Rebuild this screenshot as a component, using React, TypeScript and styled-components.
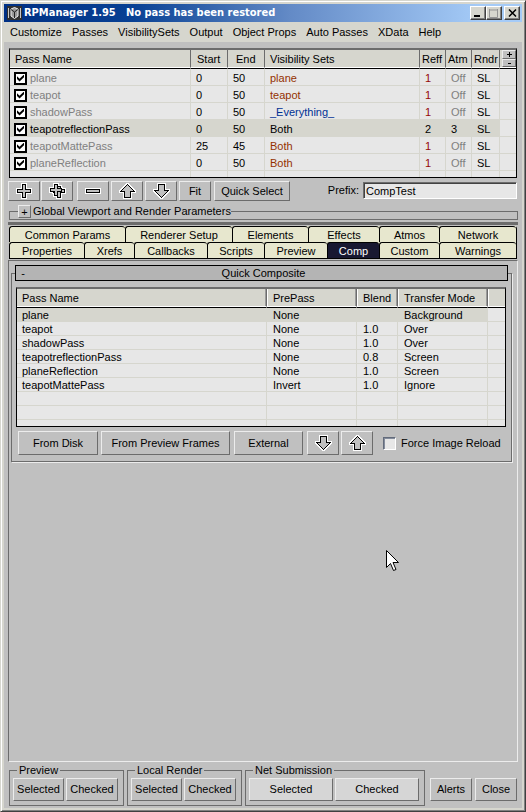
import React from "react";
import styled, { createGlobalStyle, css } from "styled-components";

const face = "#d6d6ce";
const client = "#c0c0c0";
const cell = "#e7e7e7";
const dark = "#6c6c6c";
const light = "#ececec";
const cream = "#e7e7ce";
const navy = "#181831";

const Global = createGlobalStyle`
  *, *::before, *::after { box-sizing: border-box; }
  body { margin: 0; font: 11px/13px "Liberation Sans", Arial, sans-serif; color: #000; }
  button, input { font: inherit; color: inherit; margin: 0; padding: 0; border-radius: 0; }
  button { white-space: nowrap; }
`;

const raised = css`
  border: 1px solid;
  border-color: ${light} ${dark} ${dark} ${light};
`;

const Window = styled.div`
  position: relative;
  display: flex;
  flex-direction: column;
  min-height: 100vh;
  border: 1px solid;
  border-color: ${face} #404040 #404040 ${face};
  background: ${face};
  padding: 2px;
  box-shadow: inset 1px 1px #fff, inset -1px -1px #808080;
`;

const TitleBar = styled.header`
  display: flex;
  align-items: center;
  height: 18px;
  margin: 1px;
  padding: 0 2px 0 3px;
  gap: 2px;
  background: linear-gradient(90deg, #003084 0%, #084194 25%, #638ac6 55%, #a5cbf7 92%);
  color: #fff;
`;

const Title = styled.h1`
  flex: 1;
  margin: 0;
  white-space: pre;
  font: bold 11px/16px "DejaVu Sans Condensed", "Noto Sans", sans-serif;
`;

const Caption = styled.button<{ $apart?: boolean }>`
  display: grid;
  place-items: center;
  width: 16px;
  height: 14px;
  margin-left: ${(p) => (p.$apart ? 0 : -2)}px;
  border: 1px solid;
  border-color: #fff #404040 #404040 #fff;
  box-shadow: inset -1px -1px #808080;
  background: ${face};
`;

const MenuBar = styled.nav`
  display: flex;
  align-items: center;
  gap: 10px;
  height: 19px;
  padding: 0 7px;
`;

const MenuItem = styled.button`
  border: 0;
  background: none;
`;

const Client = styled.main`
  flex: 1;
  display: flex;
  flex-direction: column;
  margin: 0 1px 1px;
  padding: 6px 4px 2px;
  background: ${client};
`;

const ListFrame = styled.div`
  margin: 0 1px;
  border: 1px solid #000;
  border-top: 2px solid ${dark};
`;

const List = styled.table<{ $row: number; $head: number }>`
  width: 100%;
  table-layout: fixed;
  border-collapse: separate;
  border-spacing: 0;
  background: ${cell};
  th, td {
    padding: 2px 0 0 5px;
    text-align: left;
    font-weight: normal;
    line-height: 11px;
    white-space: nowrap;
  }
  th {
    height: ${(p) => p.$head}px;
    background: ${face};
    border-right: 1px solid ${dark};
    border-bottom: 1px solid #fff;
  }
  th:last-child { border-right: 0; padding: 0; }
  td {
    height: ${(p) => p.$row}px;
    border-right: 1px solid ${face};
    border-bottom: 1px solid ${face};
  }
  td:last-child { border-right: 0; }
  tbody tr:first-child td { border-top: 1px solid #000; height: ${(p) => p.$row + 1}px; }
`;

const Row = styled.tr<{ $selected?: boolean }>`
  td:not(:last-child) { background: ${(p) => (p.$selected ? face : "transparent")}; }
`;

const PartialRow = styled.tr`
  td { height: 6px; border-bottom: 0; }
`;

const Tone = styled.span<{ $color?: string; $indent?: number }>`
  color: ${(p) => p.$color || "#000"};
  padding-left: ${(p) => p.$indent || 0}px;
`;

const PassLabel = styled.label<{ $on?: boolean }>`
  display: flex;
  align-items: center;
  gap: 3px;
  margin-left: -1px;
  color: ${(p) => (p.$on ? "#000" : "#808080")};
`;

const PassCheck = styled.input`
  appearance: none;
  width: 13px;
  height: 13px;
  border: 2px solid #000;
  background: #fff;
  &:checked::before {
    content: "";
    display: block;
    width: 7px;
    height: 7px;
    margin: 1px;
    background: #000;
    clip-path: polygon(0 25%, 36% 60%, 100% 0, 100% 38%, 36% 100%, 0 66%);
  }
`;

const Spin = styled.div`
  display: grid;
  grid-template-rows: 9px 8px;
  height: 17px;
  margin-left: 2px;
`;

const SpinButton = styled.button`
  ${raised}
  display: grid;
  place-items: center;
  background: ${client};
`;

const Toolbar = styled.div`
  display: flex;
  align-items: flex-start;
  margin-top: 3px;
  height: 20px;
`;

const PushButton = styled.button<{ $w?: number; $h?: number; $gap?: number; $pale?: boolean }>`
  ${raised}
  display: grid;
  place-items: center;
  width: ${(p) => (p.$w ? `${p.$w}px` : "auto")};
  height: ${(p) => p.$h || 20}px;
  margin-right: ${(p) => p.$gap || 2}px;
  background: ${(p) => (p.$pale ? "#d6d6d6" : client)};
`;

const PrefixLabel = styled.label`
  display: flex;
  flex: 1;
  justify-content: flex-end;
  gap: 4px;
  margin-top: 1px;
  padding-right: 1px;
  line-height: 16px;
`;

const PrefixInput = styled.input`
  width: 154px;
  height: 17px;
  padding: 0 2px;
  border: 1px solid;
  border-color: ${dark} #fff #fff ${dark};
  outline: 0;
  background: ${cell};
  box-shadow: inset 1px 1px #424242;
`;

const GlobalGroup = styled.fieldset`
  min-width: 0;
  height: 15px;
  margin: 4px 0 2px 1px;
  padding: 0 8px;
  border: 1px solid ${dark};
`;

const GlobalLegend = styled.legend`
  display: flex;
  align-items: center;
  gap: 2px;
  height: 13px;
  padding: 0;
`;

const Expand = styled.button`
  ${raised}
  width: 13px;
  height: 13px;
  background: ${client};
  line-height: 10px;
`;

const Divider = styled.hr`
  width: 100%;
  height: 3px;
  margin: 0;
  border: 0;
  background: ${dark};
`;

const Tabs = styled.div`
  margin: 1px 1px 0;
  border-bottom: 1px solid #000;
  border-right: 1px solid #000;
  border-top-right-radius: 3px;
`;

const TabRow = styled.div<{ $cols: string }>`
  display: grid;
  grid-template-columns: ${(p) => p.$cols};
  height: 16px;
  background: ${cream};
`;

const Tab = styled.button<{ $active?: boolean }>`
  min-width: 0;
  border: 1px solid #000;
  border-width: 1px 0 0 1px;
  border-top-left-radius: 3px;
  border-top-right-radius: 3px;
  background: ${(p) => (p.$active ? navy : cream)};
  color: ${(p) => (p.$active ? "#fff" : "#000")};
  line-height: 14px;
`;

const Panel = styled.section`
  flex: 1;
  margin-top: 1px;
  padding: 4px 5px 4px 2px;
  border: 1px solid;
  border-color: ${dark} ${light} ${light} ${dark};
`;

const Rollout = styled.fieldset`
  min-width: 0;
  margin: 0;
  padding: 0 3px 6px;
  border: 1px solid ${dark};
  box-shadow: 1px 1px ${light};
`;

const RolloutLegend = styled.legend`
  width: 100%;
  padding: 0;
`;

const RolloutButton = styled.button`
  display: grid;
  grid-template-columns: 14px 1fr 10px;
  align-items: center;
  width: 100%;
  height: 16px;
  border: 1px solid #000;
  background: #b4b4b4;
  line-height: 14px;
`;

const RolloutBody = styled.div`
  padding-top: 6px;
`;

const Actions = styled.div`
  display: flex;
  align-items: center;
  margin-top: 4px;
  padding-left: 3px;
`;

const Reload = styled.label`
  display: flex;
  align-items: center;
  gap: 5px;
  margin-left: 8px;
  white-space: nowrap;
`;

const ReloadCheck = styled.input`
  appearance: none;
  width: 13px;
  height: 13px;
  border: 1px solid;
  border-color: #636b7b #fff #fff #636b7b;
  box-shadow: inset 1px 1px #848c9c;
  background: ${cell};
`;

const Footer = styled.footer`
  display: flex;
  gap: 3px;
  margin-top: 2px;
  padding-left: 1px;
`;

const FootGroup = styled.fieldset`
  display: flex;
  min-width: 0;
  margin: 0;
  padding: 1px 3px 4px;
  border: 1px solid ${dark};
  legend {
    margin-left: 4px;
    padding: 0 2px;
  }
`;

const FootEnd = styled.div`
  display: flex;
  flex: 1;
  justify-content: flex-end;
  align-items: flex-end;
  gap: 3px;
  padding: 0 1px 5px 0;
  button { margin: 0; }
`;

const Pointer = styled.svg`
  position: absolute;
  left: 385px;
  top: 549px;
  pointer-events: none;
`;

const shapes = {
  plus: "M6.500 1.500H9.500V6.500H14.500V9.500H9.500V14.500H6.500V9.500H1.500V6.500H6.500Z",
  minus: "M1.500 6.500H14.500V9.500H1.500Z",
  up: "M8.500 1.500L15.500 8.500H11.500V14.500H5.500V8.500H1.500Z",
  down: "M8.500 14.500L1.500 7.500H5.500V1.500H11.500V7.500H15.500Z",
};

function Glyph({ kind }: { kind: keyof typeof shapes | "multi" }) {
  const list = kind === "multi"
    ? ["M8.500 3.500H11.500V6.500H15.500V9.500H11.500V14.500H8.500V9.500H4.500V6.500H8.500Z", "M5.500 1.500H8.500V5.500H12.500V8.500H8.500V12.500H5.500V8.500H1.500V5.500H5.500Z"]
    : [shapes[kind]];
  return (
    <svg width="17" height="16" viewBox="0 0 17 16" aria-hidden="true" shapeRendering="crispEdges">
      {list.map((d) => <path key={d} d={d} fill="none" stroke="#fff" strokeWidth="3" />)}
      {list.map((d) => <path key={d + "b"} d={d} fill="#c0c0c0" stroke="#000" strokeWidth="1" />)}
    </svg>
  );
}

function AppIcon() {
  return (
    <svg width="15" height="14" viewBox="0 0 15 14" aria-hidden="true">
      <path d="M0 0H15V14H0Z" fill="#303030" />
      <path d="M1.500 2V12M13.500 2V12" stroke="#c8c8c8" />
      <path d="M4 3L7.500 1.500L11 3V10L7.500 12.500L4 10Z" fill="#999" stroke="#eee" />
      <path d="M4 3.500L7.500 6L11 3.500M7.500 6V12" fill="none" stroke="#222" />
    </svg>
  );
}

const brown = "#943100";
const blue = "#003194";
const passes = [
  { name: "plane", start: 0, end: 50, set: "plane", tone: brown, reff: 1, atm: "Off" },
  { name: "teapot", start: 0, end: 50, set: "teapot", tone: brown, reff: 1, atm: "Off" },
  { name: "shadowPass", start: 0, end: 50, set: "_Everything_", tone: blue, reff: 1, atm: "Off" },
  { name: "teapotreflectionPass", start: 0, end: 50, set: "Both", tone: "#000", reff: 2, atm: "3", on: true },
  { name: "teapotMattePass", start: 25, end: 45, set: "Both", tone: brown, reff: 1, atm: "Off" },
  { name: "planeReflection", start: 0, end: 50, set: "Both", tone: brown, reff: 1, atm: "Off" },
];

const layers = [
  ["plane", "None", "", "Background"],
  ["teapot", "None", "1.0", "Over"],
  ["shadowPass", "None", "1.0", "Over"],
  ["teapotreflectionPass", "None", "0.8", "Screen"],
  ["planeReflection", "None", "1.0", "Screen"],
  ["teapotMattePass", "Invert", "1.0", "Ignore"],
  ["", "", "", ""],
  ["", "", "", ""],
];

const menus = ["Customize", "Passes", "VisibilitySets", "Output", "Object Props", "Auto Passes", "XData", "Help"];
const upperTabs = ["Common Params", "Renderer Setup", "Elements", "Effects", "Atmos", "Network"];
const lowerTabs = ["Properties", "Xrefs", "Callbacks", "Scripts", "Preview", "Comp", "Custom", "Warnings"];

const PassCol = styled.col<{ $w?: number }>`
  width: ${(p) => (p.$w ? `${p.$w}px` : "auto")};
`;

const HeadTight = styled.th`
  &&& { padding-left: 2px; }
`;

function PassList() {
  return (
    <ListFrame>
      <List $row={17} $head={18}>
        <colgroup>
          {[0, 37, 37, 155, 26, 26, 28, 16].map((w, i) => <PassCol key={i} $w={w} />)}
        </colgroup>
        <thead>
          <tr>
            <th>Pass Name</th>
            <th><Tone $indent={1}>Start</Tone></th>
            <th><Tone $indent={3}>End</Tone></th>
            <th>Visibility Sets</th>
            <HeadTight>Reff</HeadTight>
            <HeadTight>Atm</HeadTight>
            <HeadTight>Rndr</HeadTight>
            <th>
              <Spin>
                <SpinButton aria-label="Add rows">
                  <svg width="5" height="5"><path d="M0 2.500H5M2.500 0V5" stroke="#000" /></svg>
                </SpinButton>
                <SpinButton aria-label="Remove rows">
                  <svg width="3" height="3"><path d="M0 1.500H3" stroke="#000" /></svg>
                </SpinButton>
              </Spin>
            </th>
          </tr>
        </thead>
        <tbody>
          {passes.map((p) => (
            <Row key={p.name} $selected={p.on}>
              <td>
                <PassLabel $on={p.on}>
                  <PassCheck type="checkbox" defaultChecked />
                  {p.name}
                </PassLabel>
              </td>
              <td>{p.start}</td>
              <td>{p.end}</td>
              <td><Tone $color={p.tone}>{p.set}</Tone></td>
              <td><Tone $color={p.on ? "#000" : "#940808"}>{p.reff}</Tone></td>
              <td><Tone $color={p.on ? "#000" : "#808080"}>{p.atm}</Tone></td>
              <td>SL</td>
              <td />
            </Row>
          ))}
          <PartialRow>{[0, 1, 2, 3, 4, 5, 6, 7].map((i) => <td key={i} />)}</PartialRow>
        </tbody>
      </List>
    </ListFrame>
  );
}

const CompFrame = styled(ListFrame)`
  margin: 0 2px 0 1px;
`;

const CompList = styled(List)`
  th:not(:last-child) { border-right: 1px solid ${dark}; box-shadow: inset -1px 0 #9a9a9a; }
  th + th { border-left: 1px solid #fff; }
  td + td { padding-left: 6px; }
`;

function LayerList() {
  return (
    <CompFrame>
      <CompList $row={14} $head={18}>
        <colgroup>
          {[0, 90, 41, 90, 17].map((w, i) => <PassCol key={i} $w={w} />)}
        </colgroup>
        <thead>
          <tr>
            <th>Pass Name</th>
            <th>PrePass</th>
            <th>Blend</th>
            <th>Transfer Mode</th>
            <th />
          </tr>
        </thead>
        <tbody>
          {layers.map((r, i) => (
            <Row key={i} $selected={i === 0}>
              {r.map((v, k) => <td key={k}>{v}</td>)}
              <td />
            </Row>
          ))}
          <PartialRow>{[0, 1, 2, 3, 4].map((i) => <td key={i} />)}</PartialRow>
        </tbody>
      </CompList>
    </CompFrame>
  );
}

export default function App() {
  return (
    <>
      <Global />
      <Window>
        <TitleBar>
          <AppIcon />
          <Title>{"RPManager 1.95   No pass has been restored"}</Title>
          <Caption aria-label="Minimize">
            <svg width="10" height="9"><path d="M1 7H7" stroke="#000" strokeWidth="2" /></svg>
          </Caption>
          <Caption aria-label="Maximize">
            <svg width="10" height="9"><path d="M.5 1H8.500M.5 0V8.500H8.500V0" fill="none" stroke="#949494" /></svg>
          </Caption>
          <Caption $apart aria-label="Close window">
            <svg width="9" height="8"><path d="M1 .5L8 7.500M8 .5L1 7.500" stroke="#000" strokeWidth="1.500" /></svg>
          </Caption>
        </TitleBar>
        <MenuBar>{menus.map((m) => <MenuItem key={m}>{m}</MenuItem>)}</MenuBar>
        <Client>
          <PassList />
          <Toolbar>
            <PushButton $w={32} $gap={1} aria-label="Add pass"><Glyph kind="plus" /></PushButton>
            <PushButton $w={32} $gap={4} aria-label="Add several passes"><Glyph kind="multi" /></PushButton>
            <PushButton $w={32} aria-label="Remove pass"><Glyph kind="minus" /></PushButton>
            <PushButton $w={32} aria-label="Move pass up"><Glyph kind="up" /></PushButton>
            <PushButton $w={32} aria-label="Move pass down"><Glyph kind="down" /></PushButton>
            <PushButton $w={32} $gap={3}>Fit</PushButton>
            <PushButton $w={76}>Quick Select</PushButton>
            <PrefixLabel>
              Prefix:
              <PrefixInput type="text" defaultValue="CompTest" />
            </PrefixLabel>
          </Toolbar>
          <GlobalGroup>
            <GlobalLegend>
              <Expand aria-label="Expand">+</Expand>
              Global Viewport and Render Parameters
            </GlobalLegend>
          </GlobalGroup>
          <Divider />
          <Tabs role="tablist">
            <TabRow $cols="116fr 107fr 76fr 71fr 60fr 77fr">
              {upperTabs.map((t) => <Tab key={t} role="tab">{t}</Tab>)}
            </TabRow>
            <TabRow $cols="75fr 50fr 73fr 57fr 63fr 52fr 60fr 77fr">
              {lowerTabs.map((t) => (
                <Tab key={t} role="tab" aria-selected={t === "Comp"} $active={t === "Comp"}>{t}</Tab>
              ))}
            </TabRow>
          </Tabs>
          <Panel>
            <Rollout>
              <RolloutLegend>
                <RolloutButton><span>-</span><span>Quick Composite</span></RolloutButton>
              </RolloutLegend>
              <RolloutBody>
                <LayerList />
                <Actions>
                  <PushButton $w={80} $h={24} $gap={3}>From Disk</PushButton>
                  <PushButton $w={129} $h={24} $gap={4}>From Preview Frames</PushButton>
                  <PushButton $w={69} $h={24} $gap={4}>External</PushButton>
                  <PushButton $w={32} $h={24} aria-label="Move layer down"><Glyph kind="down" /></PushButton>
                  <PushButton $w={32} $h={24} aria-label="Move layer up"><Glyph kind="up" /></PushButton>
                  <Reload><ReloadCheck type="checkbox" />Force Image Reload</Reload>
                </Actions>
              </RolloutBody>
            </Rollout>
          </Panel>
          <Footer>
            <FootGroup>
              <legend>Preview</legend>
              <PushButton $w={51} $h={23}>Selected</PushButton>
              <PushButton $w={52} $h={23}>Checked</PushButton>
            </FootGroup>
            <FootGroup>
              <legend>Local Render</legend>
              <PushButton $w={51} $h={23}>Selected</PushButton>
              <PushButton $w={52} $h={23}>Checked</PushButton>
            </FootGroup>
            <FootGroup>
              <legend>Net Submission</legend>
              <PushButton $w={84} $h={23} $pale>Selected</PushButton>
              <PushButton $w={84} $h={23} $pale>Checked</PushButton>
            </FootGroup>
            <FootEnd>
              <PushButton $w={42} $h={23}>Alerts</PushButton>
              <PushButton $w={42} $h={23}>Close</PushButton>
            </FootEnd>
          </Footer>
        </Client>
        <Pointer width="13" height="21" viewBox="0 0 13 21" aria-hidden="true">
          <path d="M.5 .5V17.500L4.500 13.500L7.500 20.500L10 19.500L7 12.500H12.500Z" fill="#fff" stroke="#000" />
        </Pointer>
      </Window>
    </>
  );
}
